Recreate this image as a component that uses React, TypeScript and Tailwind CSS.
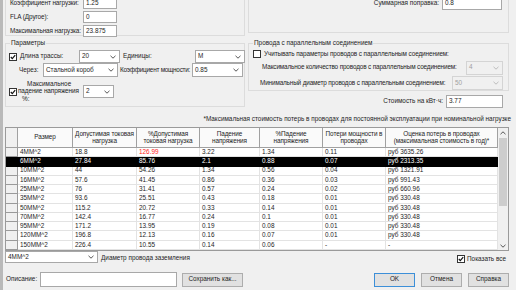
import React from 'react';

const rows = [
  ['4MM^2', '18.8', '126.99', '3.22', '1.34', '0.11', 'руб 3635.26'],
  ['6MM^2', '27.84', '85.76', '2.1', '0.88', '0.07', 'руб 2313.35'],
  ['10MM^2', '44', '54.26', '1.34', '0.56', '0.04', 'руб 1321.91'],
  ['16MM^2', '57.6', '41.45', '0.86', '0.36', '0.03', 'руб 991.43'],
  ['25MM^2', '76', '31.41', '0.57', '0.24', '0.02', 'руб 660.96'],
  ['35MM^2', '93.6', '25.51', '0.43', '0.18', '0.01', 'руб 330.48'],
  ['50MM^2', '115.2', '20.72', '0.33', '0.14', '0.01', 'руб 330.48'],
  ['70MM^2', '142.4', '16.77', '0.24', '0.1', '0.01', 'руб 330.48'],
  ['95MM^2', '171.2', '13.95', '0.19', '0.08', '0.01', 'руб 330.48'],
  ['120MM^2', '196.8', '12.13', '0.16', '0.07', '0.01', 'руб 330.48'],
  ['150MM^2', '226.4', '10.55', '0.14', '0.06', '-', '-'],
];

const cols = ['w-[55px]', 'w-[64px]', 'w-[63px]', 'w-[60px]', 'w-[63px]', 'w-[63px]', 'w-[112px]'];

const heads = [
  ['Размер'],
  ['Допустимая токовая', 'нагрузка'],
  ['%Допустимая', 'токовая нагрузка'],
  ['Падение', 'напряжения'],
  ['%Падение', 'напряжения'],
  ['Потери мощности в', 'проводах'],
  ['Оценка потерь в проводах', '(максимальная стоимость в год)*'],
];

function Arrow({ dim }: { dim?: boolean }) {
  return (
    <svg width="6" height="4" viewBox="0 0 6 4" className="shrink-0">
      <path d="M0.5 0.8 L3 3.2 L5.5 0.8" fill="none" stroke={dim ? '#b5b5b5' : '#444'} strokeWidth="0.9" />
    </svg>
  );
}

function Check({ on }: { on?: boolean }) {
  return (
    <div className="w-[8px] h-[8px] border border-[#333] bg-white flex items-center justify-center shrink-0">
      {on && (
        <svg width="6" height="6" viewBox="0 0 6 6">
          <path d="M0.8 3 L2.3 4.6 L5.2 1.2" fill="none" stroke="#111" strokeWidth="1.2" />
        </svg>
      )}
    </div>
  );
}

function Box({ v, cls }: { v: string; cls: string }) {
  return <div className={`border border-[#a8a8a8] bg-white px-[2px] flex items-center shrink-0 ${cls}`}>{v}</div>;
}

function Combo({ v, cls, dim }: { v: string; cls: string; dim?: boolean }) {
  return (
    <div
      className={`border flex items-center justify-between pl-[2px] pr-[3px] shrink-0 ${
        dim ? 'border-[#d4d4d4] bg-[#f0f0f0] text-[#a0a0a0]' : 'border-[#a8a8a8] bg-white'
      } ${cls}`}
    >
      <span>{v}</span>
      <Arrow dim={dim} />
    </div>
  );
}

function Btn({ t, def }: { t: string; def?: boolean }) {
  return (
    <div
      className={`h-[14px] flex items-center justify-center bg-[#e1e1e1] border ${
        def ? 'border-[#3c8fd8]' : 'border-[#adadad]'
      } w-[41px]`}
    >
      {t}
    </div>
  );
}

export default function App() {
  return (
    <div className="w-[516px] h-[290px] overflow-hidden bg-[#f0f0f0] flex whitespace-nowrap text-[6.4px] leading-none text-[#1e1e1e] font-['Liberation_Sans',Arial,sans-serif]">
      <div className="w-[3px] h-full bg-[#b9b9b9] shrink-0" />
      <div className="flex flex-col w-[513px] pl-[2px]">
        {/* top part */}
        <div className="flex gap-[3px] h-[110px]">
          <div className="w-[240px] flex flex-col">
            <div className="border-l border-r border-b border-[#dcdcdc] flex flex-col mt-[-3px] h-[39px] gap-[2px]">
              {[
                ['Коэффициент нагрузки:', '1.25'],
                ['FLA (Другое):', '0'],
                ['Максимальная нагрузка:', '23.875'],
              ].map(([l, v]) => (
                <div key={l} className="flex items-center h-[12px] pl-[4px]">
                  <span className="w-[73px] shrink-0 tracking-[-0.1px]">{l}</span>
                  <Box v={v} cls="w-[34px] h-[12px]" />
                </div>
              ))}
            </div>
            <div className="relative mt-[7px] h-[64px] border border-[#dcdcdc] flex flex-col pt-[6px] pl-[3px]">
              <span className="absolute top-[-4px] left-[4px] bg-[#f0f0f0] px-[1px]">Параметры</span>
              <div className="flex items-center h-[13px]">
                <Check on />
                <span className="ml-[3px] w-[59px] shrink-0">Длина трассы:</span>
                <Combo v="20" cls="w-[41px] h-[13px]" />
                <span className="ml-[3px] w-[72px] shrink-0">Единицы:</span>
                <Combo v="M" cls="w-[50px] h-[13px]" />
              </div>
              <div className="flex items-center h-[14px]">
                <span className="ml-[10px] w-[24px] shrink-0">Через:</span>
                <Combo v="Стальной короб" cls="w-[75px] h-[14px]" />
                <span className="ml-[2px] w-[72px] shrink-0 tracking-[-0.25px]">Коэффициент мощности:</span>
                <Combo v="0.85" cls="w-[51px] h-[14px]" />
              </div>
              <div className="flex items-center mt-[4px]">
                <Check on />
                <div className="flex flex-col gap-[1px] w-[66px] shrink-0">
                  <span className="ml-[10px]">Максимальное</span>
                  <span className="ml-[1px] tracking-[-0.1px]">падение напряжения</span>
                  <span className="ml-[5px]">%:</span>
                </div>
                <Combo v="2" cls="w-[31px] h-[13px]" />
              </div>
            </div>
          </div>
          <div className="w-[261px] flex flex-col">
            <div className="h-[36px] mt-[-3px] border-l border-r border-b border-[#dcdcdc] flex items-start justify-end pr-[6px]">
              <div className="flex items-center h-[13px]">
                <span className="mr-[3px]">Суммарная поправка:</span>
                <Box v="0.8" cls="w-[60px] h-[12px]" />
              </div>
            </div>
            <div className="relative mt-[10px] h-[48px] border border-[#dcdcdc] flex flex-col pt-[5px] pl-[4px]">
              <span className="absolute top-[-4px] left-[4px] bg-[#f0f0f0] px-[1px]">
                Провода с параллельным соединением
              </span>
              <div className="flex items-center h-[10px]">
                <Check />
                <span className="ml-[3px] tracking-[-0.1px]">Учитывать параметры проводов с параллельным соединением:</span>
              </div>
              <div className="flex items-center h-[15px] mt-[2px]">
                <span className="ml-[9px] w-[204px] shrink-0 tracking-[-0.15px]">
                  Максимальное количество проводов с параллельным соединением:
                </span>
                <Combo v="4" dim cls="w-[37px] h-[14px]" />
              </div>
              <div className="flex items-center h-[15px] mt-[1px]">
                <span className="ml-[7px] w-[192px] shrink-0 tracking-[-0.15px]">
                  Минимальный диаметр проводов с параллельным соединением:
                </span>
                <Combo v="50" dim cls="w-[51px] h-[14px]" />
              </div>
            </div>
            <div className="flex items-center justify-end h-[13px] mt-[4px] pr-[6px]">
              <span className="mr-[3px]">Стоимость на кВт·ч:</span>
              <Box v="3.77" cls="w-[57px] h-[13px]" />
            </div>
          </div>
        </div>

        <div className="h-[17px] flex items-center justify-end pr-[5px] pt-[2px]">
          *Максимальная стоимость потерь в проводах для постоянной эксплуатации при номинальной нагрузке
        </div>

        {/* grid */}
        <div className="w-[504px] h-[124px] border border-[#9a9a9a] bg-white flex">
          <div className="flex flex-col">
            <div className="flex h-[20px]">
              <div className="w-[12px] bg-[#f0f0f0] border-r border-b border-[#a0a0a0]" />
              {heads.map((h, i) => (
                <div
                  key={i}
                  className={`${cols[i]} bg-[#fafafa] border-r border-b border-[#a0a0a0] flex flex-col items-center justify-center gap-[1px] text-center tracking-[-0.1px]`}
                >
                  {h.map((t) => (
                    <span key={t}>{t}</span>
                  ))}
                </div>
              ))}
            </div>
            {rows.map((r, ri) => {
              const sel = ri === 1;
              return (
                <div key={ri} className={`flex h-[9.27px] ${sel ? 'bg-black text-white' : ''}`}>
                  <div
                    className={`w-[12px] border-r border-b ${
                      sel ? 'bg-black border-black' : 'bg-[#f0f0f0] border-[#9a9a9a]'
                    }`}
                  />
                  {r.map((c, ci) => (
                    <div
                      key={ci}
                      className={`${cols[ci]} pl-[2px] flex items-center border-r border-b ${
                        sel ? 'border-black' : 'border-[#e3e3e3]'
                      } ${ri === 0 && ci === 2 ? 'text-[#ff2020]' : ''}`}
                    >
                      {c}
                    </div>
                  ))}
                </div>
              );
            })}
          </div>
          <div className="w-[11px] bg-[#f0f0f0] flex flex-col items-center">
            <div className="h-[10px] flex items-center justify-center rotate-180">
              <Arrow />
            </div>
            <div className="w-[8px] h-[68px] bg-[#cdcdcd]" />
            <div className="flex-1" />
            <div className="h-[9px] flex items-center justify-center">
              <Arrow />
            </div>
          </div>
        </div>

        <div className="flex items-center h-[12px] w-[504px]">
          <Combo v="4MM^2" cls="w-[93px] h-[12px]" />
          <span className="ml-[3px] mt-[2px]">Диаметр провода заземления</span>
          <div className="flex-1" />
          <div className="flex items-center mt-[4px] mr-[3px]">
            <Check on />
            <span className="ml-[2px]">Показать все</span>
          </div>
        </div>

        <div className="flex items-center h-[15px] mt-[9px] w-[504px]">
          <span className="ml-[1px] w-[34px] shrink-0">Описание:</span>
          <div className="w-[137px] h-[15px] border border-[#a8a8a8] bg-white" />
          <div className="ml-[5px] w-[61px] h-[14px] flex items-center justify-center bg-[#e1e1e1] border border-[#adadad]">
            Сохранить как...
          </div>
          <div className="flex-1" />
          <div className="flex gap-[6px]">
            <Btn t="OK" def />
            <Btn t="Отмена" />
            <Btn t="Справка" />
          </div>
        </div>
      </div>
    </div>
  );
}
